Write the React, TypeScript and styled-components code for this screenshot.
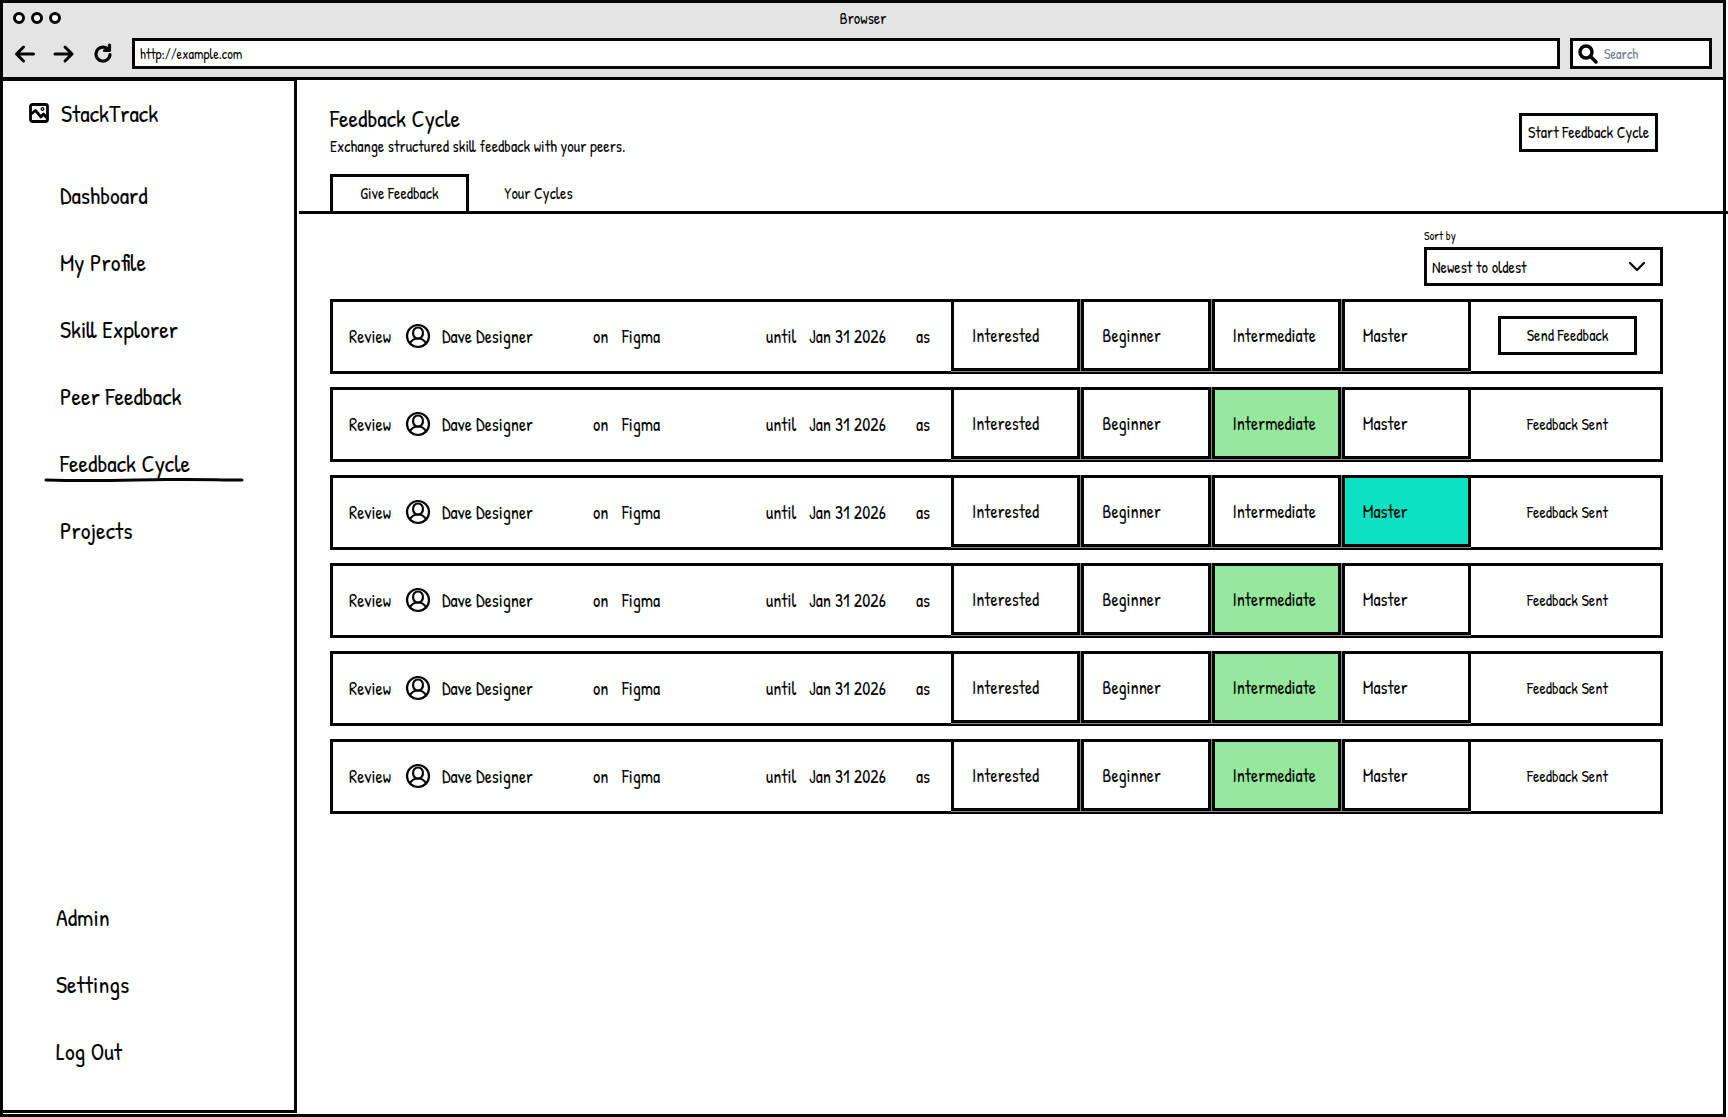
import React from "react";
import styled, { createGlobalStyle, css } from "styled-components";

const INK = "#050505";
const FONT = `"Patrick Hand", "Roboto Condensed", Lato, sans-serif`;

const GlobalStyle = createGlobalStyle`
  *, *::before, *::after { box-sizing: border-box; }
  body { margin: 0; background: #fff; color: ${INK}; font-family: ${FONT}; }
  button, input, select { font-family: inherit; color: inherit; }
  h1, p, ul { margin: 0; padding: 0; font-weight: 400; }
  ul { list-style: none; }
  svg { flex: none; }
`;

const Frame = styled.div`
  display: flex;
  flex-direction: column;
  min-height: 100vh;
  margin-right: 2px;
  border: 3px solid ${INK};
`;

const Chrome = styled.header`
  background: #e4e4e4;
  border-bottom: 3px solid ${INK};
`;

const TitleBar = styled.div`
  display: grid;
  grid-template-columns: 1fr auto 1fr;
  align-items: center;
  height: 30px;
  padding: 0 10px;
  font-size: 16px;
`;

const Dots = styled.div`
  display: flex;
  gap: 6px;
`;

const Dot = styled.span`
  width: 12px;
  height: 12px;
  border: 3px solid ${INK};
  border-radius: 50%;
  background: #fff;
`;

const AddressBar = styled.div`
  display: flex;
  align-items: center;
  gap: 10px;
  padding: 5px 11px 8px 10px;
`;

const NavIcons = styled.div`
  display: flex;
  gap: 15px;
  margin-right: 7px;
`;

const IconButton = styled.button`
  display: flex;
  width: 24px;
  height: 24px;
  padding: 0;
  border: 0;
  background: none;
`;

const boxed = css`
  border: 3px solid ${INK};
  background: #fff;
`;

const UrlInput = styled.input`
  ${boxed}
  flex: 1;
  min-width: 0;
  height: 31px;
  padding: 0 5px;
  font-size: 14px;
`;

const SearchBox = styled.label`
  ${boxed}
  display: flex;
  align-items: center;
  gap: 6px;
  width: 142px;
  height: 31px;
  padding: 0 5px;
`;

const SearchInput = styled.input`
  width: 100%;
  min-width: 0;
  padding: 0;
  border: 0;
  background: none;
  font-size: 14px;
  &::placeholder { color: #747c88; opacity: 1; }
`;

const Body = styled.div`
  display: flex;
  flex: 1;
`;

const Sidebar = styled.aside`
  display: flex;
  flex-direction: column;
  flex: none;
  width: 294px;
  margin-bottom: 1px;
  padding: 15px 0 26px;
  border: solid ${INK};
  border-width: 1px 3px 3px 0;
`;

const Brand = styled.div`
  display: flex;
  align-items: center;
  gap: 12px;
  height: 34px;
  padding-left: 26px;
  margin-bottom: 31px;
  font-size: 24px;
`;

const NavList = styled.ul<{ $indent: number }>`
  padding-left: ${(p) => p.$indent}px;
`;

const NavItem = styled.li`
  display: flex;
  align-items: center;
  height: 67px;
`;

const NavLink = styled.a`
  position: relative;
  width: 200px;
  padding-left: 16px;
  color: inherit;
  font-size: 24px;
  line-height: 32px;
  text-decoration: none;
`;

const Stroke = styled.svg`
  position: absolute;
  left: 0;
  bottom: -4px;
  width: 100%;
  height: 6px;
`;

const Spacer = styled.div`
  flex: 1;
`;

const Main = styled.main`
  flex: 1;
  min-width: 0;
`;

const PageHead = styled.div`
  display: flex;
  justify-content: space-between;
  align-items: flex-start;
  padding: 22px 65px 0 33px;
`;

const Title = styled.h1`
  font-size: 24px;
  line-height: 32px;
`;

const Subtitle = styled.p`
  font-size: 16px;
  line-height: 24px;
`;

const Button = styled.button`
  ${boxed}
  width: 139px;
  height: 39px;
  padding: 0 0 2px;
  font-size: 16px;
  white-space: nowrap;
`;

const HeadAction = styled.div`
  padding-top: 11px;
`;

const Tabs = styled.div`
  display: flex;
  margin: 16px -5px 0 2px;
  padding-left: 31px;
  border-bottom: 3px solid ${INK};
`;

const Tab = styled.button<{ $active?: boolean }>`
  width: 139px;
  height: 37px;
  padding: 0 0 2px;
  border: 3px solid ${(p) => (p.$active ? INK : "transparent")};
  border-bottom: 0;
  background: none;
  font-size: 16px;
`;

const Content = styled.div`
  padding: 13px 60px 40px 33px;
`;

const SortField = styled.label`
  display: block;
  width: 239px;
  margin: 0 0 13px auto;
  font-size: 12px;
  line-height: 18px;
`;

const SelectWrap = styled.span`
  display: grid;
  align-items: center;
  padding-top: 2px;
`;

const Select = styled.select`
  ${boxed}
  grid-area: 1 / 1;
  width: 100%;
  height: 39px;
  padding: 0 40px 0 5px;
  border-radius: 0;
  appearance: none;
  font-size: 16px;
`;

const Chevron = styled.svg`
  grid-area: 1 / 1;
  justify-self: end;
  margin-right: 17px;
  pointer-events: none;
`;

const Rows = styled.ul`
  display: grid;
  gap: 13px;
`;

const Row = styled.li`
  display: grid;
  grid-template-columns: minmax(0, 1fr) 520px 189px;
  height: 75px;
  border: 3px solid ${INK};
`;

const Summary = styled.div`
  display: grid;
  grid-template-columns: 56px 37px 151px 29px 144px 43px 107px auto;
  align-items: center;
  padding: 0 0 2px 16px;
  font-size: 18px;
  white-space: nowrap;
`;

const Levels = styled.div`
  display: grid;
  grid-template-columns: repeat(4, 1fr);
  gap: 1px;
  height: 73px;
  margin-top: -3px;
  padding-bottom: 1px;
  background: #8a8a8a;
`;

const Level = styled.button<{ $fill?: string }>`
  padding: 0 0 0 18px;
  border: 3px solid ${INK};
  background: ${(p) => p.$fill ?? "#fff"};
  font-size: 18px;
  text-align: left;
`;

const Action = styled.div`
  display: flex;
  align-items: center;
  justify-content: center;
  padding: 0 0 3px 4px;
  font-size: 16px;
`;

const ArrowIcon = ({ flip = false }: { flip?: boolean }) => (
  <svg width="24" height="24" viewBox="0 0 24 24" fill="none" stroke={INK} strokeWidth="3" strokeLinecap="round" strokeLinejoin="round">
    <path d={flip ? "M3 12H20M13 5l7 7-7 7" : "M20.5 12H4M10.500 5l-7 7 7 7"} />
  </svg>
);

const ReloadIcon = () => (
  <svg width="24" height="24" viewBox="0 0 24 24" fill="none" stroke={INK} strokeWidth="3.200" strokeLinecap="round" strokeLinejoin="round">
    <path d="M19 12.500a7 7 0 1 1-2.500-5.800L18 8M18.500 3v5.500h-5" />
  </svg>
);

const SearchIcon = () => (
  <svg width="20" height="20" viewBox="0 0 20 20" fill="none" stroke={INK} strokeWidth="3.500" strokeLinecap="round">
    <circle cx="8" cy="8" r="6" />
    <path d="M12.500 12.500l5.500 5.500" />
  </svg>
);

const PictureIcon = () => (
  <svg width="20" height="20" viewBox="0 0 20 20" fill="none" stroke={INK} strokeWidth="2.800" strokeLinecap="round" strokeLinejoin="round">
    <rect x="1.500" y="1.500" width="17" height="17" rx="2" />
    <path d="M2 11l4.500-3.500 5.500 6.500 2.500-3 3.500 4" />
    <circle cx="13.500" cy="6" r="0.600" />
  </svg>
);

const PersonIcon = () => (
  <svg width="26" height="28" viewBox="0 0 26 28" fill="none" stroke={INK} strokeWidth="2.200" strokeLinecap="round">
    <circle cx="13" cy="14" r="11" />
    <ellipse cx="13" cy="11" rx="5" ry="5.500" />
    <path d="M5 21.500c1.500-3.500 4.500-5 8-5s6.500 1.500 8 5" />
  </svg>
);

const MAIN_NAV = ["Dashboard", "My Profile", "Skill Explorer", "Peer Feedback", "Feedback Cycle", "Projects"];
const FOOT_NAV = ["Admin", "Settings", "Log Out"];
const LEVELS = ["Interested", "Beginner", "Intermediate", "Master"];
const FILLS: Record<string, string> = { Intermediate: "#95e79b", Master: "#0be2c2" };
const REVIEWS: (string | null)[] = [null, "Intermediate", "Master", "Intermediate", "Intermediate", "Intermediate"];

export default function App() {
  return (
    <>
      <GlobalStyle />
      <Frame>
        <Chrome>
          <TitleBar>
            <Dots><Dot /><Dot /><Dot /></Dots>
            <span>Browser</span>
          </TitleBar>
          <AddressBar>
            <NavIcons>
              <IconButton aria-label="Back"><ArrowIcon /></IconButton>
              <IconButton aria-label="Forward"><ArrowIcon flip /></IconButton>
              <IconButton aria-label="Reload"><ReloadIcon /></IconButton>
            </NavIcons>
            <UrlInput aria-label="Address" defaultValue="http://example.com" />
            <SearchBox>
              <SearchIcon />
              <SearchInput aria-label="Search" placeholder="Search" />
            </SearchBox>
          </AddressBar>
        </Chrome>
        <Body>
          <Sidebar>
            <Brand><PictureIcon />StackTrack</Brand>
            <nav aria-label="Main">
              <NavList $indent={41}>
                {MAIN_NAV.map((name) => (
                  <NavItem key={name}>
                    <NavLink href="#" aria-current={name === "Feedback Cycle" ? "page" : undefined}>
                      {name}
                      {name === "Feedback Cycle" && (
                        <Stroke viewBox="0 0 200 6" preserveAspectRatio="none" fill="none" stroke={INK} strokeWidth="3" strokeLinecap="round">
                          <path d="M2 3c50 1.500 80 0 120-.500s50 .500 76 .500" />
                        </Stroke>
                      )}
                    </NavLink>
                  </NavItem>
                ))}
              </NavList>
            </nav>
            <Spacer />
            <nav aria-label="Account">
              <NavList $indent={37}>
                {FOOT_NAV.map((name) => (
                  <NavItem key={name}><NavLink href="#">{name}</NavLink></NavItem>
                ))}
              </NavList>
            </nav>
          </Sidebar>
          <Main>
            <PageHead>
              <div>
                <Title>Feedback Cycle</Title>
                <Subtitle>Exchange structured skill feedback with your peers.</Subtitle>
              </div>
              <HeadAction><Button>Start Feedback Cycle</Button></HeadAction>
            </PageHead>
            <Tabs role="tablist">
              <Tab role="tab" aria-selected $active>Give Feedback</Tab>
              <Tab role="tab" aria-selected={false}>Your Cycles</Tab>
            </Tabs>
            <Content>
              <SortField>
                Sort by
                <SelectWrap>
                  <Select defaultValue="newest">
                    <option value="newest">Newest to oldest</option>
                    <option value="oldest">Oldest to newest</option>
                  </Select>
                  <Chevron width="18" height="12" viewBox="0 0 18 12" fill="none" stroke={INK} strokeWidth="2.200" strokeLinecap="round" strokeLinejoin="round">
                    <path d="M2 2l7 7 7-7" />
                  </Chevron>
                </SelectWrap>
              </SortField>
              <Rows>
                {REVIEWS.map((given, i) => (
                  <Row key={i}>
                    <Summary>
                      <span>Review</span>
                      <PersonIcon />
                      <span>Dave Designer</span>
                      <span>on</span>
                      <span>Figma</span>
                      <span>until</span>
                      <span>Jan 31 2026</span>
                      <span>as</span>
                    </Summary>
                    <Levels>
                      {LEVELS.map((level) => (
                        <Level key={level} $fill={level === given ? FILLS[level] : undefined} aria-pressed={level === given}>
                          {level}
                        </Level>
                      ))}
                    </Levels>
                    <Action>{given ? "Feedback Sent" : <Button>Send Feedback</Button>}</Action>
                  </Row>
                ))}
              </Rows>
            </Content>
          </Main>
        </Body>
      </Frame>
    </>
  );
}
